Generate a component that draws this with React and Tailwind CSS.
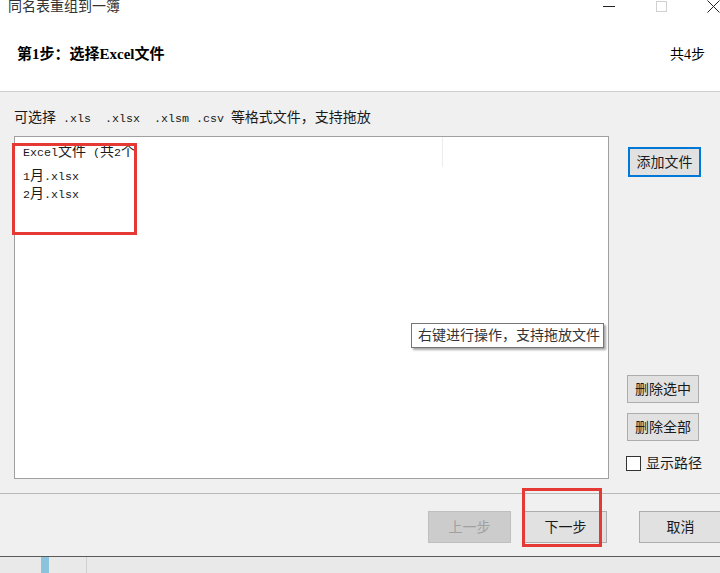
import React from "react";

const mono = "font-['Liberation_Mono','Noto_Sans_CJK_SC',monospace] text-[11.67px]";

export default function App() {
  const files = ["1月", "2月"];

  return (
    <div className="relative w-[720px] h-[573px] overflow-hidden bg-[#f0f0f0] font-['Liberation_Sans','Noto_Sans_CJK_SC',sans-serif] text-[#1a1a1a]">
      {/* Header */}
      <div className="bg-white border-b border-[#cfcfcf]">
        <div className="flex h-[22px] items-start justify-between">
          <div className="-mt-[4px] pl-[8px] text-[14px] leading-[20px] text-[#333]">同名表重组到一簿</div>
          <div className="flex h-[13px] -mr-[19px]">
            <div className="flex w-[52px] items-center justify-center">
              <div className="h-px w-[12px] bg-[#222]" />
            </div>
            <div className="flex w-[52px] items-center justify-center">
              <div className="h-[11px] w-[11px] border border-[#d0d0d0]" />
            </div>
            <div className="flex w-[52px] items-center justify-center">
              <svg width="13" height="13" viewBox="0 0 13 13" className="text-[#222]">
                <path d="M0.5 0.5L12.5 12.5M12.5 0.5L0.5 12.5" stroke="currentColor" strokeWidth="1" />
              </svg>
            </div>
          </div>
        </div>
        <div className="flex h-[69px] items-center justify-between pb-[4px] pl-[17px] pr-[15px]">
          <div className="font-['Liberation_Serif','Noto_Sans_CJK_SC',serif] text-[15px] font-bold text-black">
            第1步：选择Excel文件
          </div>
          <div className="font-['Liberation_Serif','Noto_Sans_CJK_SC',serif] text-[14px] text-black">共4步</div>
        </div>
      </div>

      {/* Main */}
      <div className="flex h-[401px] pl-[14px]">
        <div className="w-[595px]">
          <div className="mt-[16px] flex h-[20px] items-center text-[14px] whitespace-pre">
            <span>
              可选择<span className={mono}>{" .xls  .xlsx  .xlsm .csv "}</span>等格式文件，支持拖放
            </span>
          </div>
          <div className="relative mt-[8px] h-[343px] border border-[#a0a0a0] bg-white">
            <div className="flex h-[30px]">
              <div className="flex w-[428px] items-center border-r border-[#ececec] pl-[8px] text-[14px] whitespace-pre">
                <span>
                  <span className={mono}>Excel</span>文件<span className={mono}> (</span>共<span className={mono}>2</span>个
                </span>
              </div>
            </div>
            {files.map((f) => (
              <div key={f} className="flex h-[18px] items-center pl-[8px] text-[14px]">
                <span>
                  <span className={mono}>{f[0]}</span>
                  {f[1]}
                  <span className={mono}>.xlsx</span>
                </span>
              </div>
            ))}
            <div className="absolute left-[396px] top-[186px] h-[25px] w-[193px] border border-[#767676] bg-white pl-[6px] text-[14px] leading-[23px] text-[#333] shadow-[2px_2px_2px_rgba(0,0,0,0.35)]">
              右键进行操作，支持拖放文件
            </div>
          </div>
        </div>

        <div className="ml-[18px] flex flex-col">
          <button className="ml-[1px] mt-[55px] h-[30px] w-[73px] border-2 border-[#0078d7] bg-[#e1e1e1] text-[14px] text-[#1a1a1a]">
            添加文件
          </button>
          <button className="mt-[198px] h-[28px] w-[72px] border border-[#adadad] bg-[#e1e1e1] text-[14px] text-[#1a1a1a]">
            删除选中
          </button>
          <button className="mt-[10px] h-[28px] w-[72px] border border-[#adadad] bg-[#e1e1e1] text-[14px] text-[#1a1a1a]">
            删除全部
          </button>
          <div className="-ml-[1px] mt-[12px] flex h-[20px] items-center gap-[5px] text-[14px]">
            <div className="h-[15px] w-[15px] border border-[#333] bg-white" />
            <span>显示路径</span>
          </div>
        </div>
      </div>

      {/* Footer */}
      <div className="flex h-[64px] justify-end border-y border-t-[#b9b9b9] border-b-[#5a5a5a] pt-[17px]">
        <button className="h-[32px] w-[83px] border border-[#bfbfbf] bg-[#cccccc] text-[14px] text-[#a0a0a0]">上一步</button>
        <button className="ml-[13px] h-[32px] w-[83px] border border-[#adadad] bg-[#e1e1e1] text-[14px] text-[#1a1a1a]">下一步</button>
        <button className="-mr-[2px] ml-[32px] h-[32px] w-[83px] border border-[#adadad] bg-[#e1e1e1] text-[14px] text-[#1a1a1a]">取消</button>
      </div>

      {/* Outside strip */}
      <div className="flex h-[20px] bg-[#e9e9e9] pl-[41px]">
        <div className="w-[8px] bg-[#8cc3dc]" />
        <div className="ml-[37px] w-px bg-[#d0d0d0]" />
      </div>

      {/* Annotations */}
      <div className="absolute left-[12px] top-[143px] h-[92px] w-[125px] border-[3px] border-[#e53935]" />
      <div className="absolute left-[522px] top-[488px] h-[59px] w-[80px] border-[3px] border-[#e53935]" />
    </div>
  );
}
